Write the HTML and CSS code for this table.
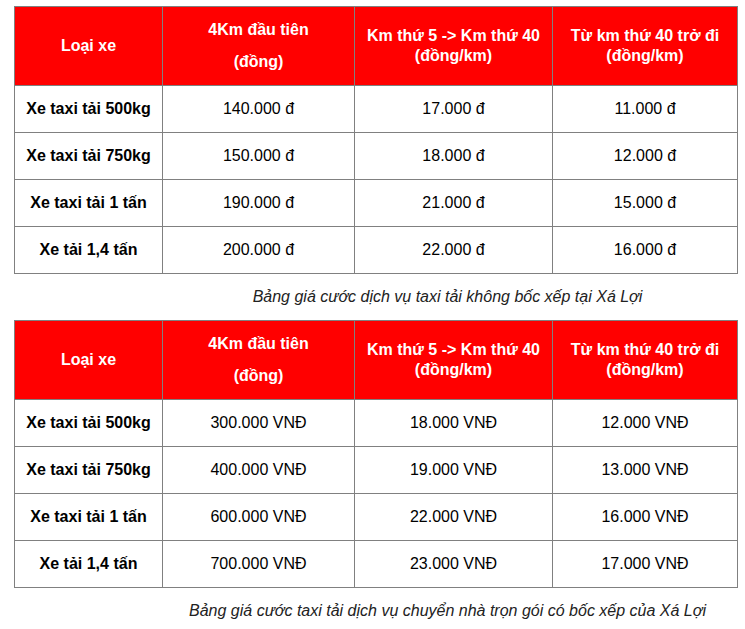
FILE: index.html
```html
<!DOCTYPE html>
<html lang="vi">
<head>
<meta charset="utf-8">
<title>Bảng giá taxi tải Xá Lợi</title>
<link rel="stylesheet" href="styles.css">
</head>
<body>
<div class="page">
  <table class="price">
    <colgroup>
      <col class="c1"><col class="c2"><col class="c3"><col class="c4">
    </colgroup>
    <thead>
      <tr>
        <th>Loại xe</th>
        <th><span class="tall">4Km đầu tiên</span><span class="tall">(đồng)</span></th>
        <th>Km thứ 5 -&gt; Km thứ 40 (đồng/km)</th>
        <th>Từ km thứ 40 trở đi (đồng/km)</th>
      </tr>
    </thead>
    <tbody>
      <tr><td class="name">Xe taxi tải 500kg</td><td>140.000 đ</td><td>17.000 đ</td><td>11.000 đ</td></tr>
      <tr><td class="name">Xe taxi tải 750kg</td><td>150.000 đ</td><td>18.000 đ</td><td>12.000 đ</td></tr>
      <tr><td class="name">Xe taxi tải 1 tấn</td><td>190.000 đ</td><td>21.000 đ</td><td>15.000 đ</td></tr>
      <tr><td class="name">Xe tải 1,4 tấn</td><td>200.000 đ</td><td>22.000 đ</td><td>16.000 đ</td></tr>
    </tbody>
  </table>
  <p class="caption">Bảng giá cước dịch vụ taxi tải không bốc xếp tại Xá Lợi</p>

  <table class="price">
    <colgroup>
      <col class="c1"><col class="c2"><col class="c3"><col class="c4">
    </colgroup>
    <thead>
      <tr>
        <th>Loại xe</th>
        <th><span class="tall">4Km đầu tiên</span><span class="tall">(đồng)</span></th>
        <th>Km thứ 5 -&gt; Km thứ 40 (đồng/km)</th>
        <th>Từ km thứ 40 trở đi (đồng/km)</th>
      </tr>
    </thead>
    <tbody>
      <tr><td class="name">Xe taxi tải 500kg</td><td>300.000 VNĐ</td><td>18.000 VNĐ</td><td>12.000 VNĐ</td></tr>
      <tr><td class="name">Xe taxi tải 750kg</td><td>400.000 VNĐ</td><td>19.000 VNĐ</td><td>13.000 VNĐ</td></tr>
      <tr><td class="name">Xe taxi tải 1 tấn</td><td>600.000 VNĐ</td><td>22.000 VNĐ</td><td>16.000 VNĐ</td></tr>
      <tr><td class="name">Xe tải 1,4 tấn</td><td>700.000 VNĐ</td><td>23.000 VNĐ</td><td>17.000 VNĐ</td></tr>
    </tbody>
  </table>
  <p class="caption wide">Bảng giá cước taxi tải dịch vụ chuyển nhà trọn gói có bốc xếp của Xá Lợi</p>
</div>
</body>
</html>
```

FILE: styles.css
```css
html, body {
  margin: 0;
  padding: 0;
  background: #ffffff;
}

body {
  font-family: "Liberation Sans", Arial, sans-serif;
  font-size: 16px;
  color: #000000;
}

.page {
  padding: 6px 0 0 14px;
  width: 723px;
}

.price {
  border-collapse: collapse;
  width: 723px;
  table-layout: fixed;
  border: 1px solid #333333;
}

.c1 { width: 148px; }
.c2 { width: 192px; }
.c3 { width: 198px; }
.c4 { width: 185px; }

.price th,
.price td {
  border: 1px solid #808080;
  text-align: center;
  vertical-align: middle;
  padding: 0 10px;
}

.price th {
  background: #ff0000;
  color: #ffffff;
  font-weight: bold;
  height: 78px;
  line-height: 20px;
}

.price td {
  height: 46px;
  line-height: 20px;
}

.price td.name {
  font-weight: bold;
}

.tall {
  display: block;
  line-height: 32px;
}

.caption {
  margin: 0;
  height: 46px;
  line-height: 46px;
  font-style: italic;
  color: #222222;
  padding-left: 144px;
  text-align: center;
  white-space: nowrap;
}
```
